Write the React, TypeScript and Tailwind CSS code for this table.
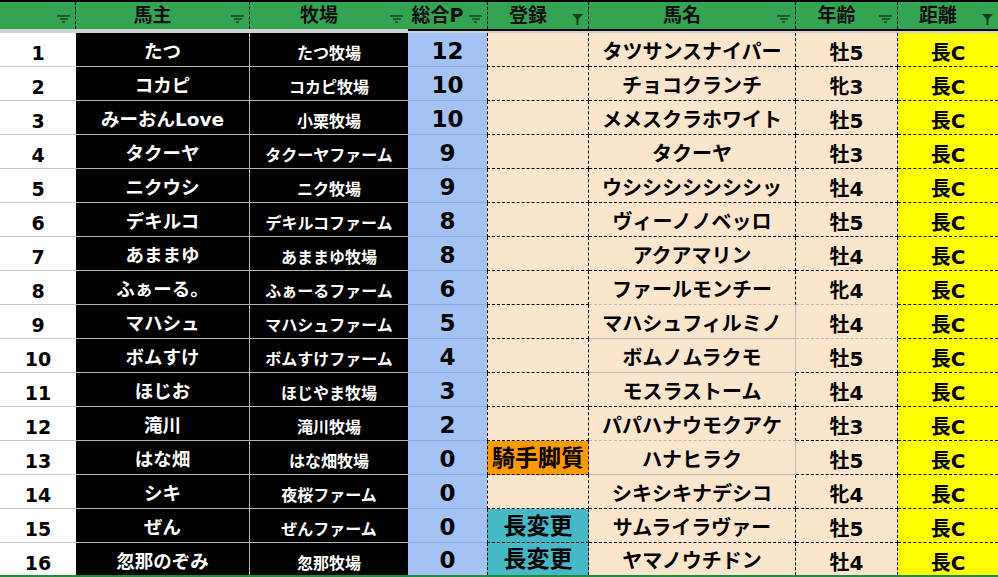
import React from 'react';

type Row = {
  n: number;
  owner: string;
  farm: string;
  p: number;
  reg: '' | 'jockey' | 'change';
  horse: string;
  age: string;
};

const rows: Row[] = [
  { n: 1, owner: 'たつ', farm: 'たつ牧場', p: 12, reg: '', horse: 'タツサンスナイパー', age: '牡5' },
  { n: 2, owner: 'コカピ', farm: 'コカピ牧場', p: 10, reg: '', horse: 'チョコクランチ', age: '牝3' },
  { n: 3, owner: 'みーおんLove', farm: '小栗牧場', p: 10, reg: '', horse: 'メメスクラホワイト', age: '牡5' },
  { n: 4, owner: 'タクーヤ', farm: 'タクーヤファーム', p: 9, reg: '', horse: 'タクーヤ', age: '牡3' },
  { n: 5, owner: 'ニクウシ', farm: 'ニク牧場', p: 9, reg: '', horse: 'ウシシシシシシシッ', age: '牡4' },
  { n: 6, owner: 'デキルコ', farm: 'デキルコファーム', p: 8, reg: '', horse: 'ヴィーノノベッロ', age: '牡5' },
  { n: 7, owner: 'あままゆ', farm: 'あままゆ牧場', p: 8, reg: '', horse: 'アクアマリン', age: '牡4' },
  { n: 8, owner: 'ふぁーる。', farm: 'ふぁーるファーム', p: 6, reg: '', horse: 'ファールモンチー', age: '牝4' },
  { n: 9, owner: 'マハシュ', farm: 'マハシュファーム', p: 5, reg: '', horse: 'マハシュフィルミノ', age: '牡4' },
  { n: 10, owner: 'ボムすけ', farm: 'ボムすけファーム', p: 4, reg: '', horse: 'ボムノムラクモ', age: '牡5' },
  { n: 11, owner: 'ほじお', farm: 'ほじやま牧場', p: 3, reg: '', horse: 'モスラストーム', age: '牡4' },
  { n: 12, owner: '滝川', farm: '滝川牧場', p: 2, reg: '', horse: 'パパハナウモクアケ', age: '牡3' },
  { n: 13, owner: 'はな畑', farm: 'はな畑牧場', p: 0, reg: 'jockey', horse: 'ハナヒラク', age: '牡5' },
  { n: 14, owner: 'シキ', farm: '夜桜ファーム', p: 0, reg: '', horse: 'シキシキナデシコ', age: '牝4' },
  { n: 15, owner: 'ぜん', farm: 'ぜんファーム', p: 0, reg: 'change', horse: 'サムライラヴァー', age: '牡5' },
  { n: 16, owner: '忽那のぞみ', farm: '忽那牧場', p: 0, reg: 'change', horse: 'ヤマノウチドン', age: '牡4' },
];

// cells where the sheet has no dashed border, so the grey gridline shows
const meiGridBottom = [8, 9, 10, 12, 13];
const meiGridRight = [9, 10, 13];
const ageGridBottom = [8, 9];

const cols = 'grid grid-cols-[76px_174px_158px_79px_102px_207px_102px_100px]';

const FilterIcon = () => (
  <svg width="14" height="8" viewBox="0 0 14 8" className="absolute right-[4px] top-[13px]">
    <rect x="0" y="0" width="13" height="2" fill="#1c5c2d" />
    <rect x="3" y="3" width="8" height="2" fill="#1c5c2d" />
    <rect x="5" y="6" width="3" height="2" fill="#1c5c2d" />
  </svg>
);

const FunnelIcon = () => (
  <svg width="11" height="11" viewBox="0 0 11 11" className="absolute right-[5px] top-[12px]">
    <polygon points="0,0 11,0 6.5,5 6.5,11 4.5,11 4.5,5" fill="#163d1f" />
  </svg>
);

const HeaderCell = ({
  label,
  filtered,
  className,
}: {
  label: string;
  filtered?: boolean;
  className: string;
}) => (
  <div className={`relative flex items-center justify-center pr-[20px] text-[19px] text-[#111] ${className}`}>
    {label}
    {filtered ? <FunnelIcon /> : <FilterIcon />}
  </div>
);

const DataRow = ({ r, last }: { r: Row; last: boolean }) => {
  const h = last ? 'h-[32px]' : 'h-[34px]';
  const regBg =
    r.reg === 'jockey' ? 'bg-[#ff9900]' : r.reg === 'change' ? 'bg-[#46b9c6]' : 'bg-[#fce5cd]';
  const meiBottom = last
    ? ''
    : meiGridBottom.includes(r.n)
      ? 'border-b border-[#b9b9b9]'
      : 'border-b border-dashed border-black';
  const meiRight = meiGridRight.includes(r.n)
    ? 'border-r border-r-[#b9b9b9]'
    : 'border-r border-dashed border-r-black';
  const ageBottom = last
    ? ''
    : ageGridBottom.includes(r.n)
      ? 'border-b border-[#b9b9b9]'
      : 'border-b border-dashed border-black';
  const dashBottom = last ? '' : 'border-b border-dashed border-black';

  return (
    <div className={`${cols} ${h}`}>
      <div className={`flex items-center justify-center pt-[8px] text-[19px] bg-white ${last ? '' : 'border-b border-[#c8c8c8]'}`}>
        {r.n}
      </div>
      <div className={`flex items-center justify-center pt-[6px] text-[18.5px] text-white bg-black border-r border-r-[#b4b4b4] ${last ? '' : 'border-b border-b-[#b4b4b4]'}`}>
        {r.owner}
      </div>
      <div className={`flex items-center justify-center pt-[9px] text-[16px] text-white bg-black ${last ? '' : 'border-b border-[#b4b4b4]'}`}>
        {r.farm}
      </div>
      <div className={`flex items-center justify-center pt-[3px] text-[23px] bg-[#a4c2f4] ${last ? '' : 'border-b border-[#8eabdc]'}`}>
        {r.p}
      </div>
      <div className={`flex items-center justify-center pt-[1px] text-[23px] ${regBg} border-l border-r border-dashed border-black ${dashBottom}`}>
        {r.reg === 'jockey' ? '騎手脚質' : r.reg === 'change' ? '長変更' : ''}
      </div>
      <div className={`flex items-center justify-center pt-[4px] text-[20px] bg-[#fce5cd] ${meiRight} ${meiBottom}`}>
        {r.horse}
      </div>
      <div className={`flex items-center justify-center pt-[7px] text-[20px] bg-[#fce5cd] border-r border-dashed border-r-black ${ageBottom}`}>
        {r.age}
      </div>
      <div className={`flex items-center justify-center pt-[7px] text-[20px] bg-[#ffff00] ${dashBottom}`}>
        長C
      </div>
    </div>
  );
};

export default function App() {
  return (
    <div className="w-[998px] h-[577px] overflow-hidden bg-white font-['DejaVu_Sans','Noto_Sans_CJK_JP',sans-serif] font-bold text-black leading-none">
      <div className={`${cols} h-[29px] bg-[#33a451] border-t-2 border-black`}>
        <HeaderCell label="" className="border-r border-dashed border-r-black" />
        <HeaderCell label="馬主" className="border-r border-dashed border-r-black" />
        <HeaderCell label="牧場" className="" />
        <HeaderCell label="総合P" className="" />
        <HeaderCell label="登録" filtered className="border-l border-r border-dashed border-black" />
        <HeaderCell label="馬名" className="border-r border-dashed border-r-black" />
        <HeaderCell label="年齢" className="border-r border-dashed border-r-black" />
        <HeaderCell label="距離" filtered className="" />
      </div>
      <div className={`${cols} h-[4px]`}>
        <div className="bg-[#d2d2d2]" />
        <div className="bg-[#d2d2d2]" />
        <div className="bg-[#d2d2d2]" />
        <div className="bg-[#d2d2d2] border-t-2 border-black" />
        <div className="bg-[#d2d2d2] border-t-2 border-black" />
        <div className="bg-[#d2d2d2] border-t-2 border-black" />
        <div className="bg-[#d2d2d2] border-t-2 border-black" />
        <div className="bg-[#d2d2d2] border-t-2 border-black" />
      </div>
      {rows.map((r, i) => (
        <DataRow key={r.n} r={r} last={i === rows.length - 1} />
      ))}
      <div className="h-[2px] bg-[#1f8b3f]" />
    </div>
  );
}
